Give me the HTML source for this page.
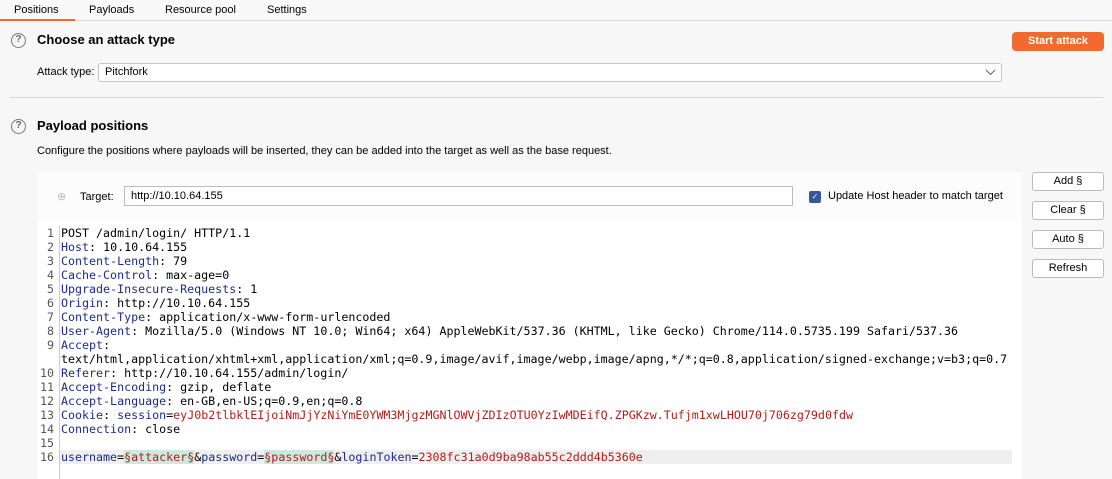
<!DOCTYPE html>
<html><head><meta charset="utf-8"><style>
*{box-sizing:border-box;margin:0;padding:0}
body{width:1112px;height:479px;overflow:hidden;background:#f7f7f7;font-family:"Liberation Sans",sans-serif;font-size:11px;color:#000;position:relative}
.abs{position:absolute}
.tabs{left:0;top:0;width:1112px;height:21px;border-bottom:1px solid #d8d8d8;background:#f9f9f9}
.tab{position:absolute;top:4px;font-size:11px}
.q{width:15px;height:15px;border:1.5px solid #777;border-radius:50%;font-size:10px;color:#666;text-align:center;line-height:12px;font-weight:bold}
h2{position:absolute;font-size:13px;font-weight:bold}
.btn{position:absolute;left:1032px;width:72px;height:19px;border:1px solid #bbb;border-radius:3px;background:#fff;text-align:center;line-height:17px;font-size:11px}
.ed{left:37px;top:222px;width:985px;height:257px;background:#fff}
.code{position:absolute;left:37px;top:226px;font-family:"DejaVu Sans Mono",monospace;font-size:11.65px;line-height:14px;white-space:pre}
.ln{position:absolute;left:37px;top:226px;width:17px;text-align:right;font-family:"DejaVu Sans Mono",monospace;font-size:11.65px;line-height:14px;white-space:pre;color:#555}
.k{color:#1e2a8c}.r{color:#b0201a}.m{background:#cce9df;color:#b0201a}
</style></head><body>
<div class="abs tabs"></div>
<div class="tab" style="left:14px">Positions</div>
<div class="abs" style="left:0;top:19px;width:75px;height:2px;background:#f26a2e"></div>
<div class="tab" style="left:89px">Payloads</div>
<div class="tab" style="left:165px">Resource pool</div>
<div class="tab" style="left:267px">Settings</div>

<div class="abs q" style="left:11px;top:33px">?</div>
<h2 style="left:37px;top:32px">Choose an attack type</h2>
<div class="abs" style="left:1012px;top:32px;width:92px;height:19px;background:#f26a30;border-radius:4px;color:#fff;font-weight:bold;text-align:center;line-height:19px;font-size:11px">Start attack</div>
<div class="abs" style="left:37px;top:66px">Attack type:</div>
<div class="abs" style="left:98px;top:63px;width:904px;height:19px;border:1px solid #c4c4c4;border-radius:3px;background:#fff;padding-left:6px;line-height:17px">Pitchfork
<svg style="position:absolute;right:5px;top:5px" width="11" height="7"><path d="M1 1l4.5 4.5L10 1" fill="none" stroke="#666" stroke-width="1.1"/></svg></div>
<div class="abs" style="left:10px;top:97px;width:1093px;height:1px;background:#d6d6d6"></div>

<div class="abs q" style="left:11px;top:119px">?</div>
<h2 style="left:37px;top:118px">Payload positions</h2>
<div class="abs" style="left:37px;top:145px">Configure the positions where payloads will be inserted, they can be added into the target as well as the base request.</div>

<div class="abs" style="left:37px;top:172px;width:985px;height:50px;background:#fcfcfc"></div>
<div class="abs" style="left:57px;top:190px;color:#bbb;font-size:11px">⊕</div>
<div class="abs" style="left:80px;top:191px">Target:</div>
<div class="abs" style="left:124px;top:186px;width:669px;height:20px;border:1px solid #bbb;background:#fff;padding-left:6px;line-height:18px">http://10.10.64.155</div>
<div class="abs" style="left:809px;top:191px;width:12px;height:12px;background:#35589a;border-radius:2px;color:#fff;font-size:8px;text-align:center;line-height:12px">✓</div>
<div class="abs" style="left:828px;top:190px">Update Host header to match target</div>

<div class="btn" style="top:172px">Add §</div>
<div class="btn" style="top:201px">Clear §</div>
<div class="btn" style="top:230px">Auto §</div>
<div class="btn" style="top:259px">Refresh</div>

<div class="abs ed"></div>
<div class="abs" style="left:59px;top:226px;width:1px;height:253px;background:#ccc"></div>
<div class="abs" style="left:60px;top:450px;width:952px;height:14px;background:#efefef"></div>
<div class="ln">1
2
3
4
5
6
7
8
9

10
11
12
13
14
15
16</div>
<div class="code" style="left:61px">POST /admin/login/ HTTP/1.1
<span class="k">Host</span>: 10.10.64.155
<span class="k">Content-Length</span>: 79
<span class="k">Cache-Control</span>: max-age=0
<span class="k">Upgrade-Insecure-Requests</span>: 1
<span class="k">Origin</span>: http://10.10.64.155
<span class="k">Content-Type</span>: application/x-www-form-urlencoded
<span class="k">User-Agent</span>: Mozilla/5.0 (Windows NT 10.0; Win64; x64) AppleWebKit/537.36 (KHTML, like Gecko) Chrome/114.0.5735.199 Safari/537.36
<span class="k">Accept</span>:
text/html,application/xhtml+xml,application/xml;q=0.9,image/avif,image/webp,image/apng,*/*;q=0.8,application/signed-exchange;v=b3;q=0.7
<span class="k">Referer</span>: http://10.10.64.155/admin/login/
<span class="k">Accept-Encoding</span>: gzip, deflate
<span class="k">Accept-Language</span>: en-GB,en-US;q=0.9,en;q=0.8
<span class="k">Cookie</span>: <span class="k">session</span>=<span class="r">eyJ0b2tlbklEIjoiNmJjYzNiYmE0YWM3MjgzMGNlOWVjZDIzOTU0YzIwMDEifQ.ZPGKzw.Tufjm1xwLHOU70j706zg79d0fdw</span>
<span class="k">Connection</span>: close

<span class="k">username</span>=<span class="m">§attacker§</span>&amp;<span class="k">password</span>=<span class="m">§password§</span>&amp;<span class="k">loginToken</span>=<span class="r">2308fc31a0d9ba98ab55c2ddd4b5360e</span></div>
</body></html>
